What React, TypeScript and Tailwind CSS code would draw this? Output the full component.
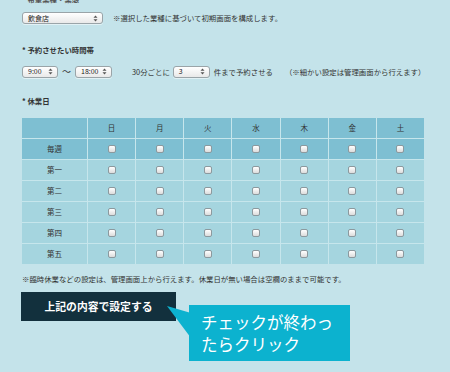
import React from "react";

const days = ["日", "月", "火", "水", "木", "金", "土"];
const weeks = ["毎週", "第一", "第二", "第三", "第四", "第五"];

function Arrows() {
  return (
    <svg width="5" height="7" viewBox="0 0 5 7" className="shrink-0">
      <path d="M2.5 0.5 L4.5 2.8 L0.5 2.8 Z" fill="#555" />
      <path d="M2.5 6.5 L4.5 4.2 L0.5 4.2 Z" fill="#555" />
    </svg>
  );
}

function FakeSelect(props: { value: string; width: string }) {
  return (
    <div
      className={
        props.width +
        " flex h-[12px] items-center justify-between rounded-[3px] border border-[#9aa4a8] bg-gradient-to-b from-white to-[#e9e9e9] pl-[5px] pr-[4px] text-[7px] leading-none text-[#222] shadow-[0_1px_0_rgba(255,255,255,0.5)]"
      }
    >
      <span>{props.value}</span>
      <Arrows />
    </div>
  );
}

function Box() {
  return (
    <div className="h-[8px] w-[8px] rounded-[2px] border border-[#8c999e] bg-gradient-to-b from-white to-[#dcdcdc]" />
  );
}

function App() {
  return (
    <div
      className="h-[372px] w-[450px] overflow-hidden bg-[#c4e3ea] pl-[22px] text-[7.4px] text-[#333]"
      style={{ fontFamily: '"Noto Sans CJK JP", "Noto Sans", sans-serif' }}
    >
      <div className="-mt-[6px] h-[9px] font-bold leading-[9px] text-[#555]">* 希望業種・業態</div>
      <div className="mt-[9px] flex items-center">
        <FakeSelect value="飲食店" width="w-[81px]" />
        <span className="ml-[10px]">※選択した業種に基づいて初期画面を構成します。</span>
      </div>

      <div className="mt-[21px] font-bold leading-[10px]">* 予約させたい時間帯</div>
      <div className="mt-[10px] flex items-center">
        <FakeSelect value="9:00" width="w-[36px]" />
        <span className="mx-[4px] text-[9px]">〜</span>
        <FakeSelect value="18:00" width="w-[37px]" />
        <span className="ml-[20px] mr-[3px]">30分ごとに</span>
        <FakeSelect value="3" width="w-[37px]" />
        <span className="ml-[4px]">件まで予約させる</span>
        <span className="ml-[12px]">（※細かい設定は管理画面から行えます）</span>
      </div>

      <div className="mt-[17px] font-bold leading-[10px]">* 休業日</div>

      <div className="mt-[12px] grid w-[402px] grid-cols-[65px_repeat(7,1fr)] gap-[1px] bg-[#c6e6ec]">
        <div className="h-[20px] bg-[#7ebfd2]" />
        {days.map((d) => (
          <div key={d} className="flex h-[20px] items-center justify-center bg-[#7ebfd2] text-[7.5px]">
            {d}
          </div>
        ))}
        {weeks.map((w, i) => (
          <React.Fragment key={w}>
            <div
              className={
                (i === 0 ? "bg-[#7ebfd2]" : "bg-[#a5d5df]") +
                " flex h-[20px] items-center justify-center text-[7.5px]"
              }
            >
              {w}
            </div>
            {days.map((d) => (
              <div
                key={d}
                className={
                  (i === 0 ? "bg-[#7ebfd2]" : "bg-[#a5d5df]") + " flex h-[20px] items-center justify-center"
                }
              >
                <Box />
              </div>
            ))}
          </React.Fragment>
        ))}
      </div>

      <div className="mt-[10px] leading-[10px]">
        ※臨時休業などの設定は、管理画面上から行えます。休業日が無い場合は空欄のままで可能です。
      </div>

      <div className="relative mt-[8px]">
        <button className="-ml-[1px] flex h-[29px] w-[155px] items-center justify-center bg-[#12303d] text-[10.8px] font-bold text-white">
          上記の内容で設定する
        </button>
        <svg className="absolute left-[145px] top-[14px]" width="25" height="40" viewBox="0 0 25 40">
          <path d="M0 0 L24 7 L24 32 Z" fill="#0cb2cf" />
        </svg>
        <div className="absolute left-[167px] top-[13px] flex h-[56px] w-[161px] flex-col justify-center bg-[#0cb2cf] pl-[12px] text-[16.5px] leading-[22px] text-white">
          <div>チェックが終わっ</div>
          <div>たらクリック</div>
        </div>
      </div>
    </div>
  );
}

export default App;
